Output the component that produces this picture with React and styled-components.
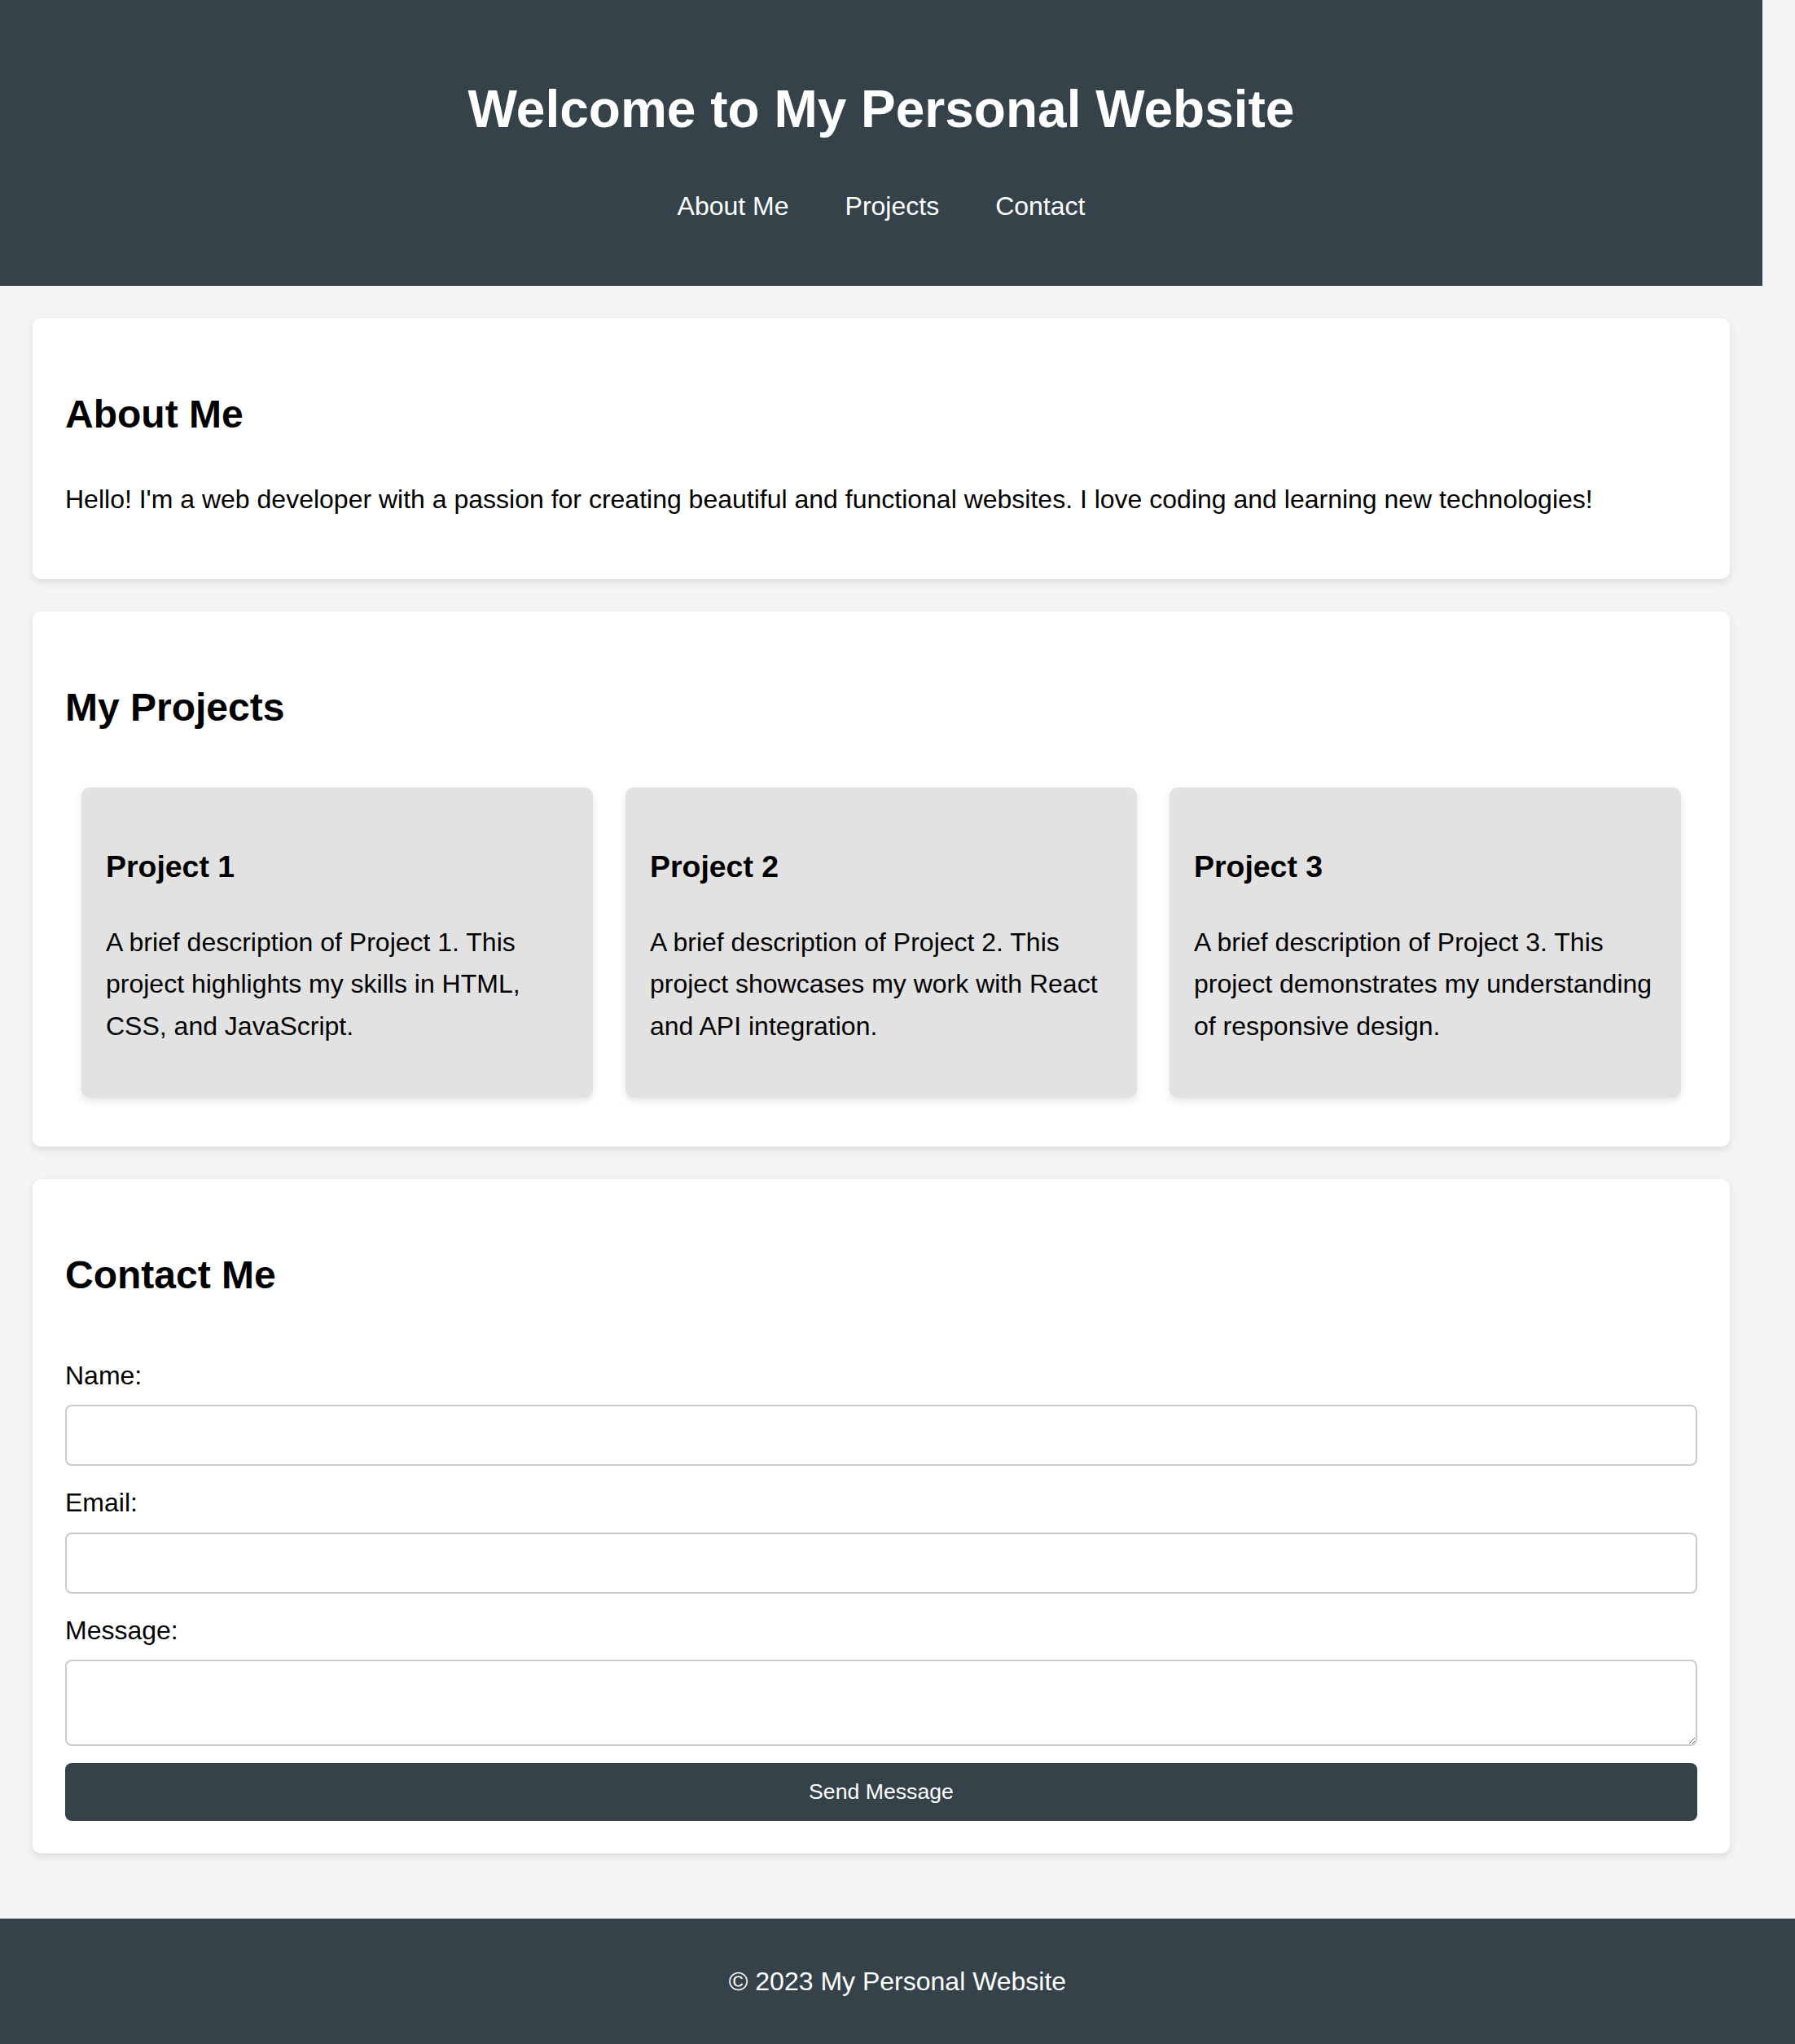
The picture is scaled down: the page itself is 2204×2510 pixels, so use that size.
import React from "react";

// style
import styled, { createGlobalStyle } from "styled-components";

const GlobalStyle = createGlobalStyle`
  body {
    margin: 0;
    background: #f4f4f4;
    color: #000;
    font-family: "Liberation Sans", Arial, sans-serif;
    font-size: 32px;
    line-height: 1.6;
  }
`;

const Header = styled.header`
  width: 2164px;
  box-sizing: border-box;
  padding: 40px 0;
  background: #35424a;
  color: #fff;
  text-align: center;
`;

const Title = styled.h1`
  margin: 42.88px 0;
  font-size: 64px;
  font-weight: 700;
`;

const NavList = styled.ul`
  display: flex;
  justify-content: center;
  gap: 69px;
  margin: 0 0 32px;
  padding: 0;
  list-style: none;
`;

const NavLink = styled.a`
  color: #fff;
  text-decoration: none;
  font-size: 32px;
`;

const Main = styled.main`
  width: 2164px;
  box-sizing: border-box;
  padding: 40px;
`;

const Section = styled.section`
  margin-bottom: 40px;
  padding: 40px;
  background: #fff;
  border-radius: 10px;
  box-shadow: 0 4px 10px rgba(0, 0, 0, 0.1);
`;

const SectionTitle = styled.h2`
  margin: 39.84px 0;
  font-size: 48px;
  font-weight: 700;
`;

const Text = styled.p`
  margin: 32px 0;
`;

const ProjectGrid = styled.div`
  display: flex;
`;

const ProjectCard = styled.div`
  flex: 1;
  margin: 20px;
  padding: 30px;
  background: #e2e2e2;
  border-radius: 10px;
  box-shadow: 0 4px 10px rgba(0, 0, 0, 0.1);
`;

const ProjectTitle = styled.h3`
  margin: 37.44px 0;
  font-size: 37.44px;
  font-weight: 700;
`;

/* flow-root keeps the first label's margin from merging with the heading's */
const Form = styled.form`
  display: flow-root;
`;

const Label = styled.label`
  display: block;
  margin-top: 20px;
`;

const Field = styled.input`
  display: block;
  width: 100%;
  box-sizing: border-box;
  margin-top: 10px;
  padding: 20px;
  border: 2px solid #ccc;
  border-radius: 8px;
  background: #fff;
  font-family: "Liberation Sans", Arial, sans-serif;
  font-size: 26.67px;
  line-height: normal;
`;

const MessageField = styled(Field).attrs({ as: "textarea" })`
  height: 106px;
  resize: vertical;
`;

const SendButton = styled.button`
  display: block;
  width: 100%;
  margin-top: 21px;
  padding: 20px;
  border: none;
  border-radius: 8px;
  background: #35424a;
  color: #fff;
  font-family: "Liberation Sans", Arial, sans-serif;
  font-size: 26.67px;
  line-height: normal;
  cursor: pointer;
`;

const Footer = styled.footer`
  padding: 20px;
  background: #35424a;
  color: #fff;
  text-align: center;
`;

const projects = [
  {
    id: 1,
    title: "Project 1",
    text: "A brief description of Project 1. This project highlights my skills in HTML, CSS, and JavaScript.",
  },
  {
    id: 2,
    title: "Project 2",
    text: "A brief description of Project 2. This project showcases my work with React and API integration.",
  },
  {
    id: 3,
    title: "Project 3",
    text: "A brief description of Project 3. This project demonstrates my understanding of responsive design.",
  },
];

const App = () => {
  return (
    <>
      <GlobalStyle />
      <Header>
        <Title>Welcome to My Personal Website</Title>
        <nav>
          <NavList>
            <li><NavLink href="#about">About Me</NavLink></li>
            <li><NavLink href="#projects">Projects</NavLink></li>
            <li><NavLink href="#contact">Contact</NavLink></li>
          </NavList>
        </nav>
      </Header>

      <Main>
        <Section id="about">
          <SectionTitle>About Me</SectionTitle>
          <Text>
            Hello! I'm a web developer with a passion for creating beautiful and
            functional websites. I love coding and learning new technologies!
          </Text>
        </Section>

        <Section id="projects">
          <SectionTitle>My Projects</SectionTitle>
          <ProjectGrid>
            {projects.map((project) => (
              <ProjectCard key={project.id}>
                <ProjectTitle>{project.title}</ProjectTitle>
                <Text>{project.text}</Text>
              </ProjectCard>
            ))}
          </ProjectGrid>
        </Section>

        <Section id="contact">
          <SectionTitle>Contact Me</SectionTitle>
          <Form onSubmit={(e) => e.preventDefault()}>
            <Label htmlFor="name">Name:</Label>
            <Field type="text" id="name" />
            <Label htmlFor="email">Email:</Label>
            <Field type="email" id="email" />
            <Label htmlFor="message">Message:</Label>
            <MessageField id="message" />
            <SendButton type="submit">Send Message</SendButton>
          </Form>
        </Section>
      </Main>

      <Footer>
        <Text>© 2023 My Personal Website</Text>
      </Footer>
    </>
  );
};

export default App;
